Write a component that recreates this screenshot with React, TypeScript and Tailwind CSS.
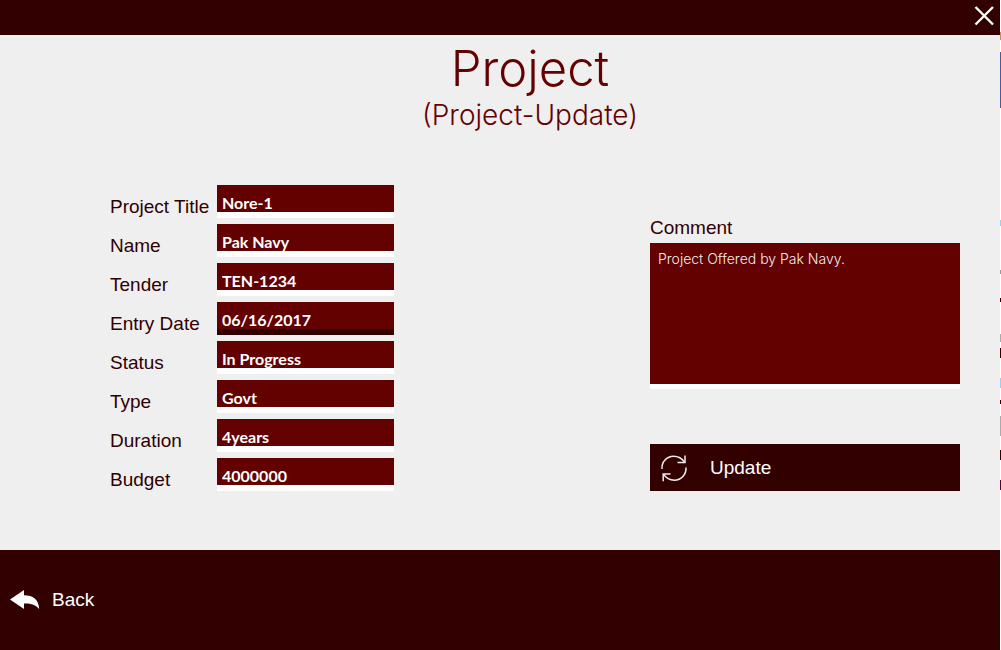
const fields = [
  { id: 'title', label: 'Project Title', value: 'Nore-1' },
  { id: 'name', label: 'Name', value: 'Pak Navy' },
  { id: 'tender', label: 'Tender', value: 'TEN-1234' },
  { id: 'entry-date', label: 'Entry Date', value: '06/16/2017', dark: true },
  { id: 'status', label: 'Status', value: 'In Progress' },
  { id: 'type', label: 'Type', value: 'Govt' },
  { id: 'duration', label: 'Duration', value: '4years' },
  { id: 'budget', label: 'Budget', value: '4000000' },
];

function CloseIcon() {
  return (
    <svg className="size-5" viewBox="0 0 20 20" fill="none" stroke="currentColor" strokeWidth="2.4" aria-hidden="true">
      <path d="M1.500 1L19 18.500M19 1L1.500 18.500" />
    </svg>
  );
}

function RefreshIcon() {
  return (
    <svg className="size-7" viewBox="0 0 28 28" fill="none" stroke="#f2eded" strokeWidth="1.5" aria-hidden="true">
      <path d="M2 15C1.4 8 6.7 2.2 13.5 2.200C18.500 2.200 22.200 4.700 24.600 8.200" />
      <path d="M25 1.500V8.500H17.500" />
      <path d="M26 13.500C26.500 20.500 21 26.200 14.500 26.200C9.500 26.200 5.700 23.700 3.400 20.200" />
      <path d="M3.200 27.300V20H10.500" />
    </svg>
  );
}

function BackIcon() {
  return (
    <svg className="h-5 w-[30px]" viewBox="0 0 30 20" fill="currentColor" aria-hidden="true">
      <path d="M0 9.500L14 0V5.200C23 5.200 28.800 9.500 29.200 19C25.500 14.500 20.500 13.200 14 13.500V19Z" />
    </svg>
  );
}

export default function App() {
  return (
    <div className="flex min-h-screen bg-white font-['Liberation_Sans',sans-serif] text-[19px] leading-6 text-[#300000]">
      <div className="flex min-w-0 flex-1 flex-col bg-[#efefef]">
        <header className="flex h-[35px] items-start justify-end bg-[#330000] px-1.5 pt-1.5 text-white">
          <button type="button" aria-label="Close">
            <CloseIcon />
          </button>
        </header>

        <main className="flex-1 pr-10 pb-[58px] pl-[110px]">
          <div className="pt-1 pr-2.5 text-center font-['Inter',sans-serif] text-[#630000]">
            <h1 className="text-[49px] leading-[60px] font-light">Project</h1>
            <h2 className="text-[28px] leading-8 font-light">(Project-Update)</h2>
          </div>

          <form className="mt-[54px] flex items-end justify-between gap-10" onSubmit={(e) => e.preventDefault()}>
            <div className="flex flex-col gap-1.5">
              {fields.map((f) => (
                <div key={f.id} className="flex h-[33px]">
                  <label htmlFor={f.id} className="w-[107px] pt-2.5 whitespace-nowrap">
                    {f.label}
                  </label>
                  <input
                    id={f.id}
                    type="text"
                    defaultValue={f.value}
                    className={`w-[177px] border-b-[6px] bg-[#630000] pt-2 pl-[5px] font-['Lato',sans-serif] text-[16px] leading-5 font-bold text-white outline-none ${
                      f.dark ? 'border-[#330000]' : 'border-white'
                    }`}
                  />
                </div>
              ))}
            </div>

            <div className="flex w-[310px] flex-col">
              <label htmlFor="comment" className="pb-[3px]">
                Comment
              </label>
              <textarea
                id="comment"
                defaultValue="Project Offered by Pak Navy."
                className="block h-[146px] resize-none border-b-[5px] border-white bg-[#630000] px-2 py-1.5 font-['Inter',sans-serif] text-[14px] leading-5 font-light text-[#f5eeee] outline-none"
              />
              <button type="submit" className="mt-[55px] flex h-[47px] items-center gap-[22px] bg-[#330000] px-2.5 pt-px text-white">
                <RefreshIcon />
                Update
              </button>
            </div>
          </form>
        </main>

        <footer className="flex h-[100px] items-center bg-[#330000] px-2.5 text-white">
          <button type="button" className="flex items-center gap-3">
            <BackIcon />
            Back
          </button>
        </footer>
      </div>

      <div className="flex w-px flex-col" aria-hidden="true">
        <div className="mt-8 h-2 bg-[#c89040]" />
        <div className="mt-3 h-14 bg-[#425f9c]" />
        <div className="mt-28 h-1.5 bg-[#8fd3f5]" />
        <div className="mt-11 h-1 bg-[#999999]" />
        <div className="mt-6 h-1 bg-[#330000]" />
        <div className="mt-8 h-2 bg-[#aaaaaa]" />
        <div className="mt-1.5 h-2.5 bg-[#330000]" />
        <div className="mt-5 h-2.5 bg-[#8fd3f5]" />
        <div className="mt-3 h-1 bg-[#330000]" />
        <div className="mt-3 h-5 bg-[#aaaaaa]" />
        <div className="mt-3.5 h-2.5 bg-[#330000]" />
        <div className="mt-5 h-2.5 bg-[#55003a]" />
      </div>
    </div>
  );
}
